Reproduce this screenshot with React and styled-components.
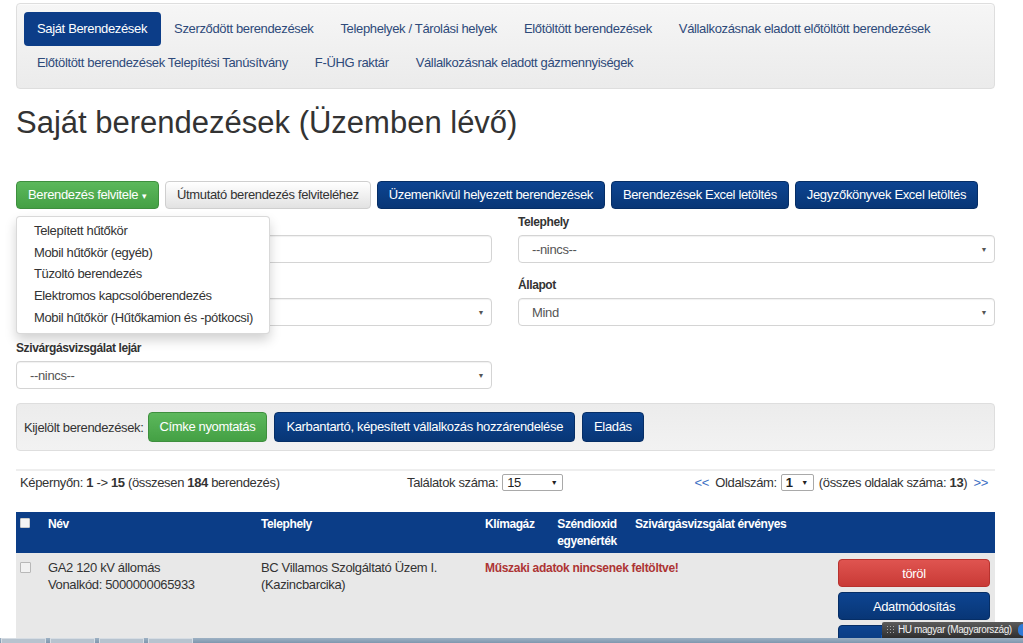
import React from "react";
import styled, { createGlobalStyle } from "styled-components";

const GlobalStyle = createGlobalStyle`
  html, body {
    margin: 0;
    padding: 0;
    background: #fff;
  }
  body {
    font-family: "Liberation Sans", Arial, sans-serif;
    font-size: 13px;
    letter-spacing: -0.35px;
    color: #333;
    overflow: hidden;
  }
  * {
    box-sizing: border-box;
  }
  button, input {
    letter-spacing: inherit;
  }
`;

const navItems = [
  "Saját Berendezések",
  "Szerződött berendezések",
  "Telephelyek / Tárolási helyek",
  "Előtöltött berendezések",
  "Vállalkozásnak eladott előtöltött berendezések",
  "Előtöltött berendezések Telepítési Tanúsítvány",
  "F-ÜHG raktár",
  "Vállalkozásnak eladott gázmennyiségek",
];

const dropdownItems = [
  "Telepített hűtőkör",
  "Mobil hűtőkör (egyéb)",
  "Tüzoltó berendezés",
  "Elektromos kapcsolóberendezés",
  "Mobil hűtőkör (Hűtőkamion és -pótkocsi)",
];

const App = () => {
  return (
    <>
      <GlobalStyle />
      <Page>
        <NavPanel>
          {navItems.map((item, i) => (
            <NavItem key={item} $active={i === 0}>
              {item}
            </NavItem>
          ))}
        </NavPanel>

        <Title>Saját berendezések (Üzemben lévő)</Title>

        <ActionRow>
          <Btn $variant="green">
            Berendezés felvitele <Caret>▾</Caret>
          </Btn>
          <Btn $variant="light">Útmutató berendezés felviteléhez</Btn>
          <Btn $variant="blue">Üzemenkívül helyezett berendezések</Btn>
          <Btn $variant="blue">Berendezések Excel letöltés</Btn>
          <Btn $variant="blue">Jegyzőkönyvek Excel letöltés</Btn>

          <DropdownMenu>
            {dropdownItems.map((item) => (
              <DropdownItem key={item}>{item}</DropdownItem>
            ))}
          </DropdownMenu>
        </ActionRow>

        <FilterGrid>
          <Field>
            <Label>&nbsp;</Label>
            <TextInput type="text" />
          </Field>
          <Field>
            <Label>Telephely</Label>
            <SelectBox>
              <span>--nincs--</span>
              <SelectCaret>▼</SelectCaret>
            </SelectBox>
          </Field>
          <Field>
            <Label>&nbsp;</Label>
            <SelectBox>
              <span></span>
              <SelectCaret>▼</SelectCaret>
            </SelectBox>
          </Field>
          <Field>
            <Label>Állapot</Label>
            <SelectBox>
              <span>Mind</span>
              <SelectCaret>▼</SelectCaret>
            </SelectBox>
          </Field>
          <Field>
            <Label>Szivárgásvizsgálat lejár</Label>
            <SelectBox>
              <span>--nincs--</span>
              <SelectCaret>▼</SelectCaret>
            </SelectBox>
          </Field>
        </FilterGrid>

        <SelectionBar>
          <SelectionLabel>Kijelölt berendezések:</SelectionLabel>
          <Btn $variant="green" $tall>
            Címke nyomtatás
          </Btn>
          <Btn $variant="blue" $tall>
            Karbantartó, képesített vállalkozás hozzárendelése
          </Btn>
          <Btn $variant="blue" $tall>
            Eladás
          </Btn>
        </SelectionBar>

        <Divider />

        <PagerRow>
          <PagerLeft>
            Képernyőn: <b>1</b> -&gt; <b>15</b> (összesen <b>184</b> berendezés)
          </PagerLeft>
          <PagerMid>
            Találatok száma:
            <MiniSelect $width={61}>
              <span>15</span>
              <MiniCaret>▼</MiniCaret>
            </MiniSelect>
          </PagerMid>
          <PagerRight>
            <PagerLink>&lt;&lt;</PagerLink> Oldalszám:
            <MiniSelect $width={33}>
              <b>1</b>
              <MiniCaret>▼</MiniCaret>
            </MiniSelect>
            (összes oldalak száma: <b>13</b>) <PagerLink>&gt;&gt;</PagerLink>
          </PagerRight>
        </PagerRow>

        <Table>
          <colgroup>
            <col style={{ width: 24 }} />
            <col style={{ width: 213 }} />
            <col style={{ width: 224 }} />
            <col style={{ width: 70 }} />
            <col style={{ width: 80 }} />
            <col style={{ width: 203 }} />
            <col />
          </colgroup>
          <thead>
            <tr>
              <Th $check>
                <HeadCheck />
              </Th>
              <Th>Név</Th>
              <Th>Telephely</Th>
              <Th>Klímagáz</Th>
              <Th $center>
                Széndioxid
                <br />
                egyenérték
              </Th>
              <Th>Szivárgásvizsgálat érvényes</Th>
              <Th />
            </tr>
          </thead>
          <tbody>
            <tr>
              <Td $check>
                <RowCheck />
              </Td>
              <Td>
                GA2 120 kV állomás
                <br />
                Vonalkód: 5000000065933
              </Td>
              <Td>
                BC Villamos Szolgáltató Üzem I.
                <br />
                (Kazincbarcika)
              </Td>
              <Td colSpan={3}>
                <Warning>Műszaki adatok nincsenek feltöltve!</Warning>
              </Td>
              <Td $actions>
                <RowBtn $variant="red">töröl</RowBtn>
                <RowBtn $variant="blue">Adatmódosítás</RowBtn>
                <RowBtn $variant="blue">Megtekintés</RowBtn>
              </Td>
            </tr>
          </tbody>
        </Table>
      </Page>

      <Taskbar>
        <TaskTab />
        <TaskTab />
        <TaskTab />
        <TaskTab />
      </Taskbar>
      <LangTip>
        <Grip />
        HU magyar (Magyarország)
        <LangDot />
      </LangTip>
    </>
  );
};

export default App;

const Page = styled.div`
  width: 995px;
  padding: 3px 0 0 16px;
`;

const NavPanel = styled.nav`
  display: flex;
  flex-wrap: wrap;
  padding: 8px 8px 8px 7px;
  border: 1px solid #dedede;
  border-radius: 4px;
  background: linear-gradient(#f6f6f6, #ebebeb);
  box-shadow: inset 0 1px 0 rgba(255, 255, 255, 0.6);
`;

const NavItem = styled.a`
  display: block;
  padding: 8px 14px 8px 13px;
  line-height: 18px;
  font-size: 13px;
  border-radius: 4px;
  white-space: nowrap;
  cursor: pointer;
  color: ${(p) => (p.$active ? "#fff" : "#2e4a7a")};
  background: ${(p) => (p.$active ? "#0c3d88" : "transparent")};
`;

const Title = styled.h2`
  margin: 17px 0 42px;
  font-size: 31px;
  line-height: 33px;
  letter-spacing: 0;
  font-weight: normal;
  color: #333;
`;

const ActionRow = styled.div`
  position: relative;
  display: flex;
  gap: 6px;
  align-items: center;
`;

const variants = {
  green: {
    bg: "linear-gradient(#5cb85c, #44a044)",
    border: "#3e8f3e",
    color: "#fff",
  },
  blue: {
    bg: "linear-gradient(#0d4491, #083676)",
    border: "#062e66",
    color: "#fff",
  },
  light: {
    bg: "linear-gradient(#fff, #e2e2e2)",
    border: "#cfcfcf",
    color: "#333",
  },
  red: {
    bg: "linear-gradient(#df5450, #c93a36)",
    border: "#b8322e",
    color: "#fff",
  },
};

const Btn = styled.button`
  font-family: inherit;
  font-size: 13px;
  line-height: 18px;
  height: ${(p) => (p.$tall ? "30px" : "28px")};
  padding: 0 11px;
  border-radius: 4px;
  white-space: nowrap;
  cursor: pointer;
  color: ${(p) => variants[p.$variant].color};
  background: ${(p) => variants[p.$variant].bg};
  border: 1px solid ${(p) => variants[p.$variant].border};
`;

const Caret = styled.span`
  font-size: 9px;
  margin-left: 1px;
`;

const DropdownMenu = styled.ul`
  position: absolute;
  top: calc(100% + 7px);
  left: 0;
  z-index: 10;
  width: 254px;
  margin: 0;
  padding: 3px 0 4px;
  list-style: none;
  background: #fff;
  border: 1px solid rgba(0, 0, 0, 0.15);
  border-radius: 4px;
  box-shadow: 0 6px 12px rgba(0, 0, 0, 0.18);
`;

const DropdownItem = styled.li`
  padding: 3px 17px;
  line-height: 15.7px;
  font-size: 13px;
  color: #333;
  white-space: nowrap;
`;

const FilterGrid = styled.div`
  display: grid;
  grid-template-columns: 476px 477px;
  column-gap: 26px;
  row-gap: 13px;
  margin-top: 4px;
`;

const Field = styled.div`
  display: flex;
  flex-direction: column;
`;

const Label = styled.label`
  font-size: 12px;
  font-weight: bold;
  letter-spacing: -0.4px;
  line-height: 18px;
  margin-bottom: 4px;
  color: #333;
`;

const TextInput = styled.input`
  height: 28px;
  border: 1px solid #d4d4d4;
  border-radius: 4px;
  box-shadow: inset 0 1px 1px rgba(0, 0, 0, 0.06);
  font-family: inherit;
  font-size: 13px;
  padding: 0 13px;
`;

const SelectBox = styled.div`
  display: flex;
  align-items: center;
  justify-content: space-between;
  height: 28px;
  padding: 0 7px 0 13px;
  border: 1px solid #d4d4d4;
  border-radius: 4px;
  box-shadow: inset 0 1px 1px rgba(0, 0, 0, 0.06);
  font-size: 13px;
  color: #555;
  background: #fff;
`;

const SelectCaret = styled.span`
  font-size: 7px;
  color: #555;
`;

const SelectionBar = styled.div`
  display: flex;
  align-items: center;
  gap: 7px;
  margin-top: 14px;
  padding: 8px 7px;
  border: 1px solid #dedede;
  border-radius: 4px;
  background: linear-gradient(#ececec, #f2f2f2);
`;

const SelectionLabel = styled.span`
  margin-right: -3px;
  color: #333;
`;

const Divider = styled.hr`
  margin: 18px 0 0;
  border: 0;
  border-top: 2px solid #eee;
`;

const PagerRow = styled.div`
  display: grid;
  grid-template-columns: 391px 1fr auto;
  align-items: center;
  margin: 3px 0 20px;
  line-height: 18px;
  font-size: 13px;
  color: #333;
`;

const PagerLeft = styled.div`
  padding-left: 4px;
`;

const PagerMid = styled.div`
  white-space: nowrap;
`;

const PagerRight = styled.div`
  white-space: nowrap;
  padding-right: 4px;
`;

const PagerLink = styled.a`
  color: #3b6fc4;
  margin: 0 3px;
`;

const MiniSelect = styled.span`
  display: inline-flex;
  align-items: center;
  justify-content: space-between;
  vertical-align: middle;
  width: ${(p) => p.$width}px;
  height: 17px;
  margin: -2px 5px 0 4px;
  padding: 0 5px 0 4px;
  border: 1px solid #a9a9a9;
  border-radius: 2px;
  background: #fff;
  color: #222;
`;

const MiniCaret = styled.span`
  font-size: 7px;
`;

const Table = styled.table`
  width: 979px;
  border-collapse: collapse;
  table-layout: fixed;
`;

const Th = styled.th`
  background: #0b3d87;
  color: #fff;
  font-size: 12px;
  font-weight: bold;
  letter-spacing: -0.4px;
  line-height: 17px;
  vertical-align: top;
  text-align: ${(p) => (p.$center ? "center" : "left")};
  padding: ${(p) => (p.$check ? "6px 4px 3px" : "4px 8px 3px")};
  height: 41px;
`;

const Td = styled.td`
  background: #e8e8e8;
  vertical-align: top;
  font-size: 13px;
  line-height: 17px;
  color: #333;
  padding: ${(p) =>
    p.$actions ? "6px 5px 0 8px" : p.$check ? "9px 4px 0" : "6px 8px 0"};
  height: 92px;
`;

const HeadCheck = styled.span`
  display: block;
  width: 10px;
  height: 10px;
  background: #f4f4f4;
  border: 1px solid #c9c9c9;
  border-radius: 1px;
`;

const RowCheck = styled.span`
  display: block;
  width: 11px;
  height: 11px;
  background: #f2f2f2;
  border: 1px solid #b8b8b8;
  border-radius: 1px;
`;

const Warning = styled.span`
  font-size: 12px;
  font-weight: bold;
  letter-spacing: -0.3px;
  color: #ad3434;
`;

const RowBtn = styled.button`
  display: block;
  width: 100%;
  height: 28px;
  margin-bottom: 5px;
  font-family: inherit;
  font-size: 13px;
  border-radius: 4px;
  color: #fff;
  background: ${(p) => variants[p.$variant].bg};
  border: 1px solid ${(p) => variants[p.$variant].border};
`;

const Taskbar = styled.div`
  position: fixed;
  left: 0;
  right: 0;
  bottom: 0;
  height: 5px;
  display: flex;
  gap: 4px;
  padding-left: 1px;
  background: linear-gradient(#9db1c4, #7f97ae);
`;

const TaskTab = styled.div`
  width: 45px;
  height: 5px;
  border: 1px solid #d6dde4;
  border-bottom: 0;
  background: #b7c3cf;
`;

const LangTip = styled.div`
  position: fixed;
  right: 0;
  bottom: 5px;
  width: 141px;
  height: 16px;
  display: flex;
  align-items: center;
  gap: 4px;
  padding-left: 4px;
  font-size: 10px;
  line-height: 12px;
  letter-spacing: -0.4px;
  color: #f2f2f2;
  white-space: nowrap;
  background: linear-gradient(#5c5c5c, #2e2e2e);
  border-top-left-radius: 2px;
`;

const Grip = styled.span`
  flex: none;
  width: 8px;
  height: 10px;
  background-image: radial-gradient(#aaa 35%, transparent 40%);
  background-size: 3px 3px;
`;

const LangDot = styled.span`
  flex: none;
  width: 5px;
  height: 12px;
  margin-left: auto;
  border-radius: 6px 0 0 6px;
  background: #2f7ad8;
`;
